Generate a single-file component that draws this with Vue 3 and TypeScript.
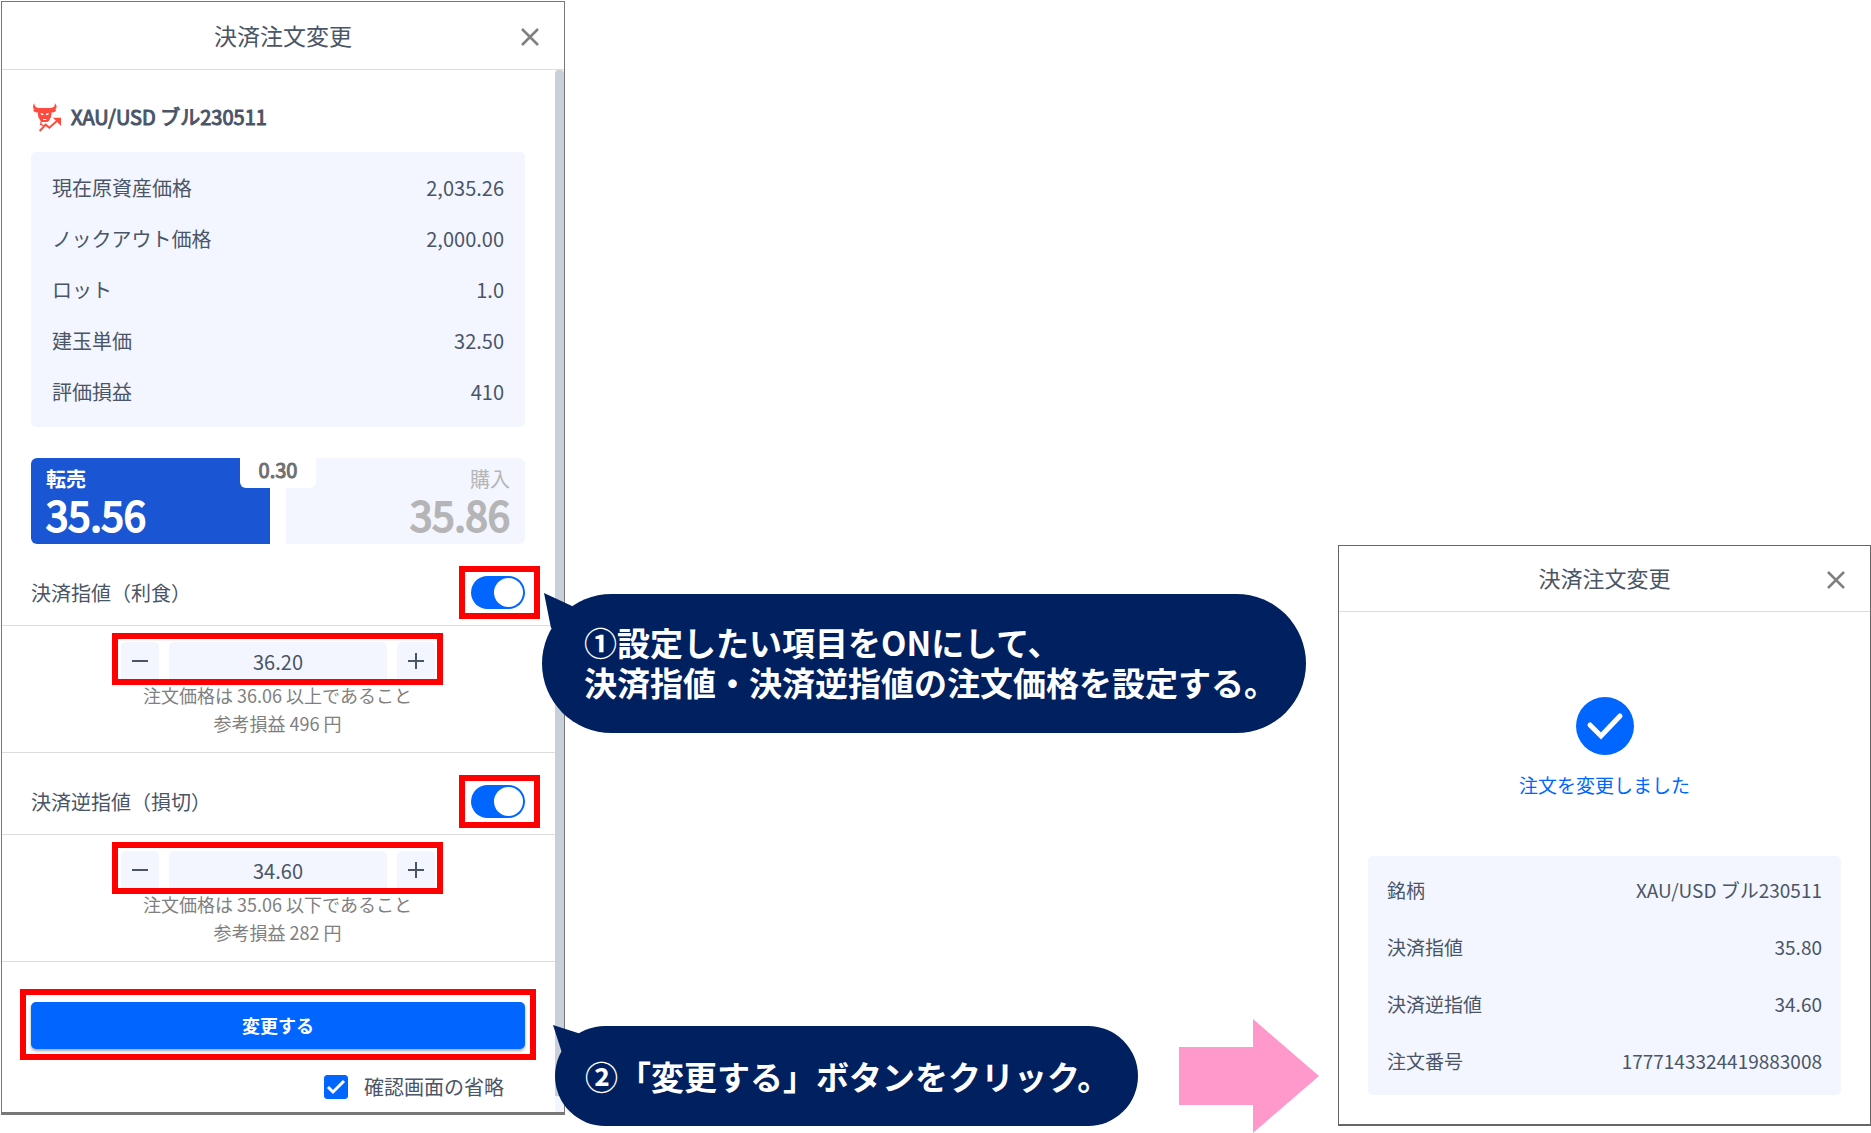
<script setup lang="ts">
import { ref } from 'vue'

interface Row {
  label: string
  value: string
}

interface OrderLeg {
  id: string
  title: string
  enabled: boolean
  price: string
  hint: string
  estimate: string
}

const summary: Row[] = [
  { label: '現在原資産価格', value: '2,035.26' },
  { label: 'ノックアウト価格', value: '2,000.00' },
  { label: 'ロット', value: '1.0' },
  { label: '建玉単価', value: '32.50' },
  { label: '評価損益', value: '410' },
]

const legs = ref<OrderLeg[]>([
  {
    id: 'limit',
    title: '決済指値（利食）',
    enabled: true,
    price: '36.20',
    hint: '注文価格は 36.06 以上であること',
    estimate: '参考損益 496 円',
  },
  {
    id: 'stop',
    title: '決済逆指値（損切）',
    enabled: true,
    price: '34.60',
    hint: '注文価格は 35.06 以下であること',
    estimate: '参考損益 282 円',
  },
])

const result: Row[] = [
  { label: '銘柄', value: 'XAU/USD ブル230511' },
  { label: '決済指値', value: '35.80' },
  { label: '決済逆指値', value: '34.60' },
  { label: '注文番号', value: '1777143324419883008' },
]

const skipConfirm = ref(true)

function step(leg: OrderLeg, delta: number) {
  leg.price = (Number(leg.price) + delta).toFixed(2)
}
</script>

<template>
  <main class="page">
    <section class="dialog order">
      <header class="head">
        <h1>決済注文変更</h1>
        <button type="button" class="close" aria-label="閉じる">
          <svg viewBox="0 0 18 18" width="18" height="18"><path d="M1 1L17 17M17 1L1 17" /></svg>
        </button>
      </header>
      <div class="body">
        <div class="content">
          <h2 class="symbol">
            <svg class="bull" viewBox="0 0 84 87" width="28" height="29" aria-hidden="true">
              <path d="M5 1C3 9 7 14 17 15H53C63 14 67 9 65 1C73 8 72 15 66 20H70C68 27 62 29 56 28L54 42L48 53L43 57H27L22 53L16 42L14 28C8 29 2 27 0 20H5C-2 15-2 8 5 1Z" />
              <path class="cut" d="M23 29L32 33L30 37L24 35ZM47 29L38 33L40 37L46 35ZM30 48H40V51H30Z" />
              <path class="line" d="M25 55L23 64L32 68" />
              <path class="trend" d="M20 84L38 65L49 74L74 52" />
              <path d="M60 44H84V69Z" />
            </svg>
            XAU/USD ブル230511
          </h2>
          <dl class="card summary">
            <div v-for="row in summary" :key="row.label" class="row">
              <dt>{{ row.label }}</dt>
              <dd>{{ row.value }}</dd>
            </div>
          </dl>
          <div class="quotes">
            <button type="button" class="quote sell">
              <span>転売</span>
              <strong>35.56</strong>
            </button>
            <button type="button" class="quote buy" disabled>
              <span>購入</span>
              <strong>35.86</strong>
            </button>
            <div class="spread">0.30</div>
          </div>
          <template v-for="leg in legs" :key="leg.id">
            <div class="leg-head">
              <label :for="`${leg.id}-on`">{{ leg.title }}</label>
              <span class="switch-box marked">
                <input :id="`${leg.id}-on`" v-model="leg.enabled" type="checkbox" role="switch" class="switch" />
              </span>
            </div>
            <div class="leg-body">
              <div class="stepper marked">
                <button type="button" aria-label="減らす" @click="step(leg, -0.01)">
                  <svg viewBox="0 0 16 16" width="16" height="16"><path d="M0 8H16" /></svg>
                </button>
                <input v-model="leg.price" type="text" :aria-label="leg.title" />
                <button type="button" aria-label="増やす" @click="step(leg, 0.01)">
                  <svg viewBox="0 0 16 16" width="16" height="16"><path d="M0 8H16M8 0V16" /></svg>
                </button>
              </div>
              <p>{{ leg.hint }}</p>
              <p>{{ leg.estimate }}</p>
            </div>
          </template>
          <div class="submit-box marked">
            <button type="button" class="submit">変更する</button>
          </div>
          <label class="skip">
            <span class="tick">
              <input v-model="skipConfirm" type="checkbox" />
              <svg v-if="skipConfirm" viewBox="0 0 24 24" width="24" height="24"><path d="M4 12L9 17L20 6" /></svg>
            </span>
            確認画面の省略
          </label>
        </div>
        <div class="scroll"><div class="thumb"></div></div>
      </div>
    </section>

    <div class="guide">
      <p class="balloon first">
        <svg class="tail" viewBox="0 0 36 40" width="36" height="40"><path d="M2 0L30 13L34 38L9 35Z" /></svg>
        ①設定したい項目をONにして、<br />決済指値・決済逆指値の注文価格を設定する。
      </p>
      <div class="next">
        <p class="balloon second">
          <svg class="tail" viewBox="0 0 36 40" width="36" height="40"><path d="M1 0L29 9L34 34L10 28Z" /></svg>
          ②「変更する」ボタンをクリック。
        </p>
        <svg class="arrow" viewBox="0 0 140 114" width="140" height="114" aria-hidden="true">
          <path d="M0 28H74V0L140 57L74 114V86H0Z" />
        </svg>
      </div>
    </div>

    <section class="dialog done">
      <header class="head">
        <h1>決済注文変更</h1>
        <button type="button" class="close" aria-label="閉じる">
          <svg viewBox="0 0 18 18" width="18" height="18"><path d="M1 1L17 17M17 1L1 17" /></svg>
        </button>
      </header>
      <div class="notice">
        <svg viewBox="0 0 58 58" width="58" height="58" aria-hidden="true">
          <circle cx="29" cy="29" r="29" />
          <path d="M14 28L25 39L44 19" />
        </svg>
        <p>注文を変更しました</p>
      </div>
      <dl class="card result">
        <div v-for="row in result" :key="row.label" class="row">
          <dt>{{ row.label }}</dt>
          <dd>{{ row.value }}</dd>
        </div>
      </dl>
    </section>
  </main>
</template>

<style>
body {
  margin: 0;
  background: #fff;
}
</style>

<style scoped>
* {
  box-sizing: border-box;
}

.page {
  display: grid;
  grid-template-columns: 565fr 773fr 533fr;
  align-items: start;
  overflow: hidden;
  font-family: "Noto Sans CJK JP", "Noto Sans", sans-serif;
  font-size: 20px;
  color: #4a5567;
}

h1,
h2,
p,
dl,
dd {
  margin: 0;
}

button,
input {
  margin: 0;
  padding: 0;
  border: 0;
  font: inherit;
  color: inherit;
}

svg {
  display: block;
}

.dialog {
  border: 1px solid #777;
  background: #fff;
}

.order {
  margin: 1px 0 0 1px;
  border-bottom: 3px solid #777;
}

.head {
  display: grid;
  grid-template-columns: 1fr auto 1fr;
  align-items: center;
  height: 68px;
  padding: 0 25px;
  border-bottom: 1px solid #dcdcdc;
}

.head h1 {
  grid-column: 2;
  padding-bottom: 2px;
  font-size: 23px;
  font-weight: 400;
  line-height: 32px;
}

.close {
  justify-self: end;
  padding-top: 2px;
  background: none;
}

.close path {
  fill: none;
  stroke: #808080;
  stroke-width: 2.5;
}

.body {
  display: flex;
}

.content {
  flex: 1;
  min-width: 0;
}

.scroll {
  width: 9px;
  padding-bottom: 16px;
  background: #f3f6fe;
}

.thumb {
  height: 100%;
  border-radius: 4px 4px 0 0;
  background: #c8d0d9;
}

.symbol {
  display: flex;
  align-items: center;
  gap: 10px;
  padding: 31px 29px 19px;
  font-size: 20px;
  font-weight: 400;
  line-height: 32px;
  -webkit-text-stroke: 1px currentColor;
}

.bull {
  fill: #ff4b3e;
  margin-left: 2px;
}

.bull .cut {
  fill: #fff;
}

.bull .line,
.bull .trend {
  fill: none;
  stroke: #ff4b3e;
  stroke-width: 4;
}

.bull .trend {
  stroke-width: 6;
}

.card {
  border-radius: 5px;
  background: #f3f6fe;
}

.row {
  display: flex;
  justify-content: space-between;
  align-items: center;
}

.summary {
  margin: 0 30px 0 29px;
  padding: 10px 21px;
}

.summary .row {
  height: 51px;
}

.quotes {
  position: relative;
  display: flex;
  gap: 16px;
  height: 86px;
  margin: 31px 30px 0 29px;
}

.quote {
  flex: 1;
  display: flex;
  flex-direction: column;
  justify-content: flex-start;
  padding: 7px 15px 0;
  text-align: left;
}

.quote span {
  font-weight: 700;
  line-height: 28px;
}

.quote strong {
  font-size: 40px;
  font-weight: 400;
  line-height: 42px;
  -webkit-text-stroke: 2px currentColor;
}

.sell {
  border-radius: 6px 0 0 6px;
  background: #1a55d3;
  color: #fff;
}

.buy {
  align-items: flex-end;
  border-radius: 0 6px 6px 0;
  background: #f3f6fe;
  color: #b5b5b8;
}

.buy span {
  font-weight: 400;
}

.spread {
  position: absolute;
  top: 0;
  left: 50%;
  width: 76px;
  margin-left: -38px;
  padding-bottom: 6px;
  border-radius: 0 0 6px 6px;
  background: #fff;
  color: #6f6f6f;
  line-height: 24px;
  text-align: center;
  -webkit-text-stroke: 1px currentColor;
}

.marked {
  outline: 6px solid #f00;
}

.leg-head {
  display: flex;
  justify-content: space-between;
  align-items: center;
  padding: 28px 21px 12px 29px;
  border-bottom: 1px solid #dcdcdc;
}

.switch-box {
  padding: 4px 9px 4px 6px;
}

.switch {
  display: block;
  width: 54px;
  height: 33px;
  appearance: none;
  border-radius: 17px;
  background: #b5b5b8;
}

.switch::before {
  content: "";
  display: block;
  width: 29px;
  height: 29px;
  margin: 2px;
  border-radius: 50%;
  background: #fff;
}

.switch:checked {
  display: flex;
  justify-content: flex-end;
  background: #06f;
}

.leg-body {
  display: flex;
  flex-direction: column;
  align-items: center;
  height: 127px;
  padding: 13px 2px 0 0;
  border-bottom: 1px solid #dcdcdc;
  color: #808080;
  font-size: 18px;
  line-height: 28px;
}

.stepper {
  display: flex;
  gap: 10px;
  height: 40px;
  margin-bottom: 2px;
  padding: 3px 2px 0 3px;
  color: #4a5567;
  font-size: 20px;
}

.stepper button,
.stepper input {
  border-radius: 5px 5px 0 0;
  background: #f3f6fe;
}

.stepper button {
  display: flex;
  justify-content: center;
  align-items: center;
  width: 38px;
}

.stepper button path {
  fill: none;
  stroke: #4a5567;
  stroke-width: 2;
}

.stepper input {
  width: 218px;
  padding-top: 2px;
  text-align: center;
}

.submit-box {
  margin: 33px 25px 0 24px;
  padding: 7px 5px 5px;
}

.submit {
  display: block;
  width: 100%;
  height: 47px;
  padding-bottom: 2px;
  border-radius: 5px;
  background: #06f;
  box-shadow: 0 2px 3px rgba(0, 0, 0, 0.35);
  color: #fff;
  font-size: 18px;
  font-weight: 700;
}

.skip {
  display: flex;
  justify-content: flex-end;
  align-items: center;
  gap: 16px;
  height: 58px;
  padding: 7px 51px 0 0;
}

.tick {
  position: relative;
  width: 24px;
  height: 24px;
}

.tick input {
  display: block;
  width: 24px;
  height: 24px;
  appearance: none;
  border: 1px solid #06f;
  border-radius: 3px;
}

.tick input:checked {
  background: #06f;
}

.tick svg {
  position: absolute;
  inset: 0;
  pointer-events: none;
}

.tick path {
  fill: none;
  stroke: #fff;
  stroke-width: 3;
}

.guide {
  position: relative;
  padding-top: 594px;
}

.balloon {
  position: relative;
  width: max-content;
  border-radius: 70px;
  background: #002060;
  color: #fff;
  font-size: 33px;
  font-weight: 700;
  line-height: 40px;
}

.first {
  margin-left: -23px;
  padding: 28px 29px 31px 42px;
}

.tail {
  position: absolute;
  top: -1px;
  left: 0;
  fill: #002060;
}

.next {
  display: flex;
  align-items: center;
  gap: 41px;
  margin: 286px 0 0 -10px;
}

.second {
  padding: 30px 28px 30px 30px;
}

.second .tail {
  left: -3px;
}

.arrow {
  fill: #f9c;
}

.done {
  margin-top: 545px;
  font-size: 19px;
  border-color: #666;
  border-bottom-width: 2px;
}

.done .head {
  height: 66px;
}

.done .head h1 {
  padding-bottom: 3px;
  font-size: 22px;
}

.notice {
  display: flex;
  flex-direction: column;
  align-items: center;
  gap: 16px;
  padding: 85px 0 57px;
  color: #06f;
  line-height: 28px;
}

.notice circle {
  fill: #06f;
}

.notice path {
  fill: none;
  stroke: #fff;
  stroke-width: 5;
  stroke-linecap: round;
}

.result {
  margin: 0 29px 29px;
  padding: 5px 19px 6px;
}

.result .row {
  height: 57px;
}
</style>
